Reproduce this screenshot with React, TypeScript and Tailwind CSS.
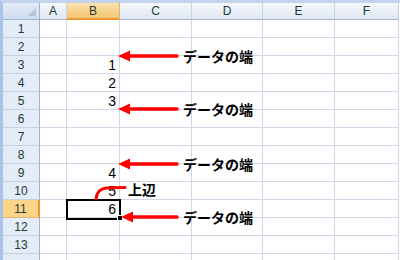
const columns = [
  { label: "A", width: "w-[27px]" },
  { label: "B", width: "w-[53px]" },
  { label: "C", width: "w-[72px]" },
  { label: "D", width: "w-[71px]" },
  { label: "E", width: "w-[72px]" },
  { label: "F", width: "w-[64px]" },
];

const values: Record<number, string> = { 3: "1", 4: "2", 5: "3", 9: "4", 10: "5", 11: "6" };
const rows = Array.from({ length: 14 }, (_, i) => i + 1);

const jp = { fontFamily: '"Noto Sans CJK JP", "Noto Sans", sans-serif' };

// label rows: top offset of each "データの端" note
const notes = [43, 96, 151, 204];

function Arrow({ y, tip }: { y: number; tip: number }) {
  return (
    <g>
      <line x1={tip + 10} y1={y} x2={177} y2={y} stroke="#ff0000" strokeWidth={3.5} strokeLinecap="round" />
      <polygon points={`${tip},${y} ${tip + 12},${y - 5.5} ${tip + 12},${y + 5.5}`} fill="#ff0000" />
    </g>
  );
}

export default function App() {
  return (
    <div
      className="relative w-[400px] h-[260px] overflow-hidden bg-white border-t-[3px] border-l-[3px] border-t-[#c2d3ea] border-l-[#a9c3e8]"
      style={{ fontFamily: '"Liberation Sans", Arial, sans-serif' }}
    >
      {/* column headers */}
      <div className="flex h-[17px]">
        <div className="relative w-[37px] shrink-0 bg-gradient-to-b from-[#e3ebf6] to-[#cfdcef] border-r border-b border-[#9eb6ce]">
          <svg className="absolute right-[3px] bottom-[3px]" width="8" height="8" viewBox="0 0 8 8">
            <polygon points="8,0 8,8 0,8" fill="#b4c3d6" />
          </svg>
        </div>
        {columns.map((c) =>
          c.label === "B" ? (
            <div
              key={c.label}
              className={`${c.width} shrink-0 flex items-center justify-center text-[12px] text-[#1d3a35] bg-gradient-to-b from-[#fae1ad] to-[#f4c66e] border-r border-r-[#d5b486] border-b-2 border-b-[#f29536]`}
            >
              {c.label}
            </div>
          ) : (
            <div
              key={c.label}
              className={`${c.width} shrink-0 flex items-center justify-center text-[12px] text-[#1d3a35] bg-gradient-to-b from-[#f5f8fc] to-[#dfe7f2] border-r border-r-[#c5d2e3] border-b border-b-[#9eb6ce]`}
            >
              {c.label}
            </div>
          )
        )}
      </div>

      {/* body rows */}
      {rows.map((r) => (
        <div key={r} className="flex h-[18px]">
          {r === 11 ? (
            <div className="w-[37px] shrink-0 flex items-center justify-center text-[12px] text-[#1d3a35] bg-[#fbd48a] border-r-2 border-r-[#f29536] border-b border-b-[#e7b86a]">
              {r}
            </div>
          ) : (
            <div className="w-[37px] shrink-0 flex items-center justify-center text-[12px] text-[#1d3a35] bg-[#e4ecf7] border-r border-r-[#9eb6ce] border-b border-b-[#c5d2e3]">
              {r < 14 ? r : ""}
            </div>
          )}
          {columns.map((c) => (
            <div
              key={c.label}
              className={`${c.width} shrink-0 flex items-end justify-end pr-[3px] text-[14px] leading-[16px] text-black border-r border-b border-[#d0d7e5]`}
            >
              {c.label === "B" ? values[r] ?? "" : ""}
            </div>
          ))}
        </div>
      ))}

      {/* selected cell B11 */}
      <div className="absolute left-[63px] top-[196px] w-[55px] h-[21px] border-2 border-black" />
      <div className="absolute left-[114px] top-[212px] w-[6px] h-[6px] bg-black border border-white" />

      {/* annotations */}
      <svg className="absolute left-[-3px] top-[-3px] pointer-events-none" width="400" height="260">
        <Arrow y={56} tip={118} />
        <Arrow y={109} tip={118} />
        <Arrow y={164} tip={118} />
        <Arrow y={217} tip={121} />
        <path d="M96,199 Q97,189 106,188 L125,187.5" fill="none" stroke="#ff0000" strokeWidth={3} strokeLinecap="round" />
      </svg>

      {notes.map((t) => (
        <div
          key={t}
          style={{ ...jp, top: t }}
          className="absolute left-[180px] text-[14px] font-bold leading-[20px] text-black"
        >
          データの端
        </div>
      ))}
      <div style={jp} className="absolute left-[125px] top-[176px] text-[14px] font-bold leading-[20px] text-black">上辺</div>
    </div>
  );
}
